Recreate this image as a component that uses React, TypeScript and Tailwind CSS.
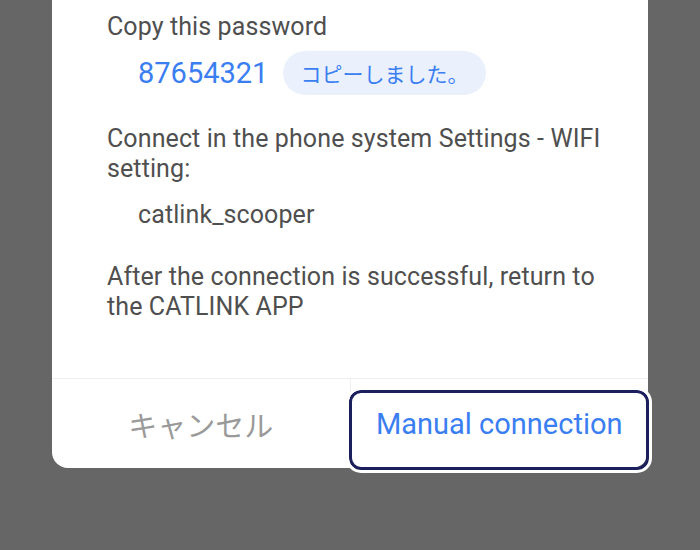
export default function App() {
  return (
    <div className="h-[550px] w-[700px] overflow-hidden bg-[#666666] font-['Roboto','Noto_Sans_CJK_JP',sans-serif]">
      <div className="ml-[52px] w-[596px] rounded-b-[16px] bg-white">
        <div className="pl-[55px] pr-[38px] pt-[12px] pb-[56px] text-[25px] leading-[30px] tracking-[0.1px] text-[#4f4f4f]">
          <p>Copy this password</p>
          <div className="mt-[9px] flex items-center pl-[31px]">
            <span className="text-[29px] leading-[44px] tracking-normal text-[#3a7ef2]">87654321</span>
            <span className="ml-[15px] flex h-[44px] items-center rounded-full bg-[#eaf1fd] pl-[17px] pr-[18px] font-['Noto_Sans_CJK_JP',sans-serif] text-[21px] tracking-normal text-[#3a7ef2]">
              コピーしました。
            </span>
          </div>
          <p className="mt-[29px]">Connect in the phone system Settings - WIFI setting:</p>
          <p className="mt-[16px] pl-[31px]">catlink_scooper</p>
          <p className="mt-[32px]">After the connection is successful, return to the CATLINK APP</p>
        </div>
        <div className="relative flex h-[90px] border-t border-[#eeeeee]">
          <button className="flex flex-1 items-center justify-center pt-[2px] font-['Noto_Sans_CJK_JP',sans-serif] text-[29px] text-[#9a9a9a]">
            キャンセル
          </button>
          <div className="w-px bg-[#eeeeee]" />
          <button className="flex flex-1 items-center justify-center pt-[2px] text-[29px] text-[#3a7ef2]">
            Manual connection
          </button>
          {/* highlight frame */}
          <div className="pointer-events-none absolute left-[297px] top-[11px] h-[80px] w-[300px] rounded-[12px] border-[3px] border-[#1b1f5c] outline-[3px] outline-solid outline-white" />
        </div>
      </div>
    </div>
  )
}
